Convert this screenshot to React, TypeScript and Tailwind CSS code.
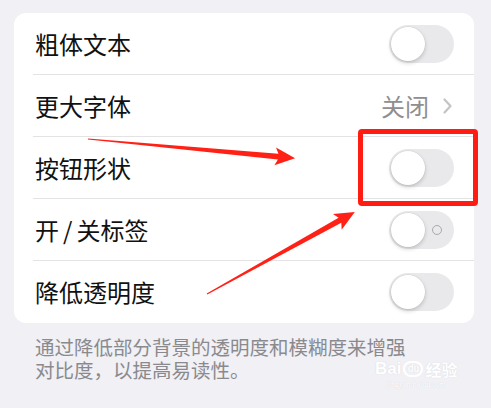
const font = { fontFamily: '"Noto Sans CJK SC", "Noto Sans", sans-serif' };

function Toggle({ label }: { label?: boolean }) {
  return (
    <div className="relative w-[65px] h-[38px] rounded-full bg-[#e9e9eb] shrink-0">
      <div className="absolute left-[2px] top-[2px] w-[34px] h-[34px] rounded-full bg-white shadow-[0_2px_4px_rgba(0,0,0,0.18),0_0_0_0.5px_rgba(0,0,0,0.06)]" />
      {label && (
        <div className="absolute right-[12px] top-[14px] w-[10px] h-[10px] rounded-full border-[1.5px] border-[#a9a9ad]" />
      )}
    </div>
  );
}

function Row({
  title,
  last,
  children,
}: {
  title: React.ReactNode;
  last?: boolean;
  children: React.ReactNode;
}) {
  return (
    <div
      className={`ml-[19px] h-[62px] pr-[20px] flex items-center justify-between ${
        last ? "" : "border-b border-[#e3e3e6]"
      }`}
    >
      <span className="pl-[2px] text-[24px] leading-none text-[#111]">{title}</span>
      {children}
    </div>
  );
}

function Arrow({ x, y, len, angle }: { x: number; y: number; len: number; angle: number }) {
  const L = len;
  return (
    <g transform={`translate(${x} ${y}) rotate(${angle})`}>
      <polygon
        points={`0,-0.6 ${L - 17},-2.8 ${L - 20},-9 ${L},0 ${L - 20},9 ${L - 17},2.8 0,0.6`}
        fill="#ff2116"
      />
    </g>
  );
}

export default function App() {
  return (
    <div
      className="relative w-[491px] h-[408px] overflow-hidden bg-[#f0f0f5] pt-[13px] pl-[14px]"
      style={font}
    >
      <div className="w-[460px] bg-white rounded-[12px]">
        <Row title="粗体文本">
          <Toggle />
        </Row>
        <Row title="更大字体">
          <div className="flex items-center gap-[14px] pr-[2px]">
            <span className="text-[24px] leading-none text-[#8e8e93]">关闭</span>
            <svg width="9" height="16" viewBox="0 0 9 16" fill="none">
              <path d="M1.5 1.5 L7.5 8 L1.5 14.5" stroke="#c4c4c8" strokeWidth="2.2" strokeLinecap="round" strokeLinejoin="round" />
            </svg>
          </div>
        </Row>
        <Row title="按钮形状">
          <Toggle />
        </Row>
        <Row
          title={
            <>
              开<span className="mx-[4px]">/</span>关标签
            </>
          }
        >
          <Toggle label />
        </Row>
        <Row title="降低透明度" last>
          <Toggle />
        </Row>
      </div>

      <p className="mt-[12px] ml-[21px] flex flex-col items-start text-[19.5px] leading-[23px] text-[#8a8a8e]">
        <span>通过降低部分背景的透明度和模糊度来增强</span>
        <span>对比度，以提高易读性。</span>
      </p>

      <div className="absolute left-[358px] top-[129px] w-[120px] h-[77px] border-[5px] border-[#ff1c12] rounded-[4px]" />

      <svg className="absolute left-0 top-0 pointer-events-none" width="491" height="408">
        <Arrow x={88} y={139} len={208} angle={5.3} />
        <Arrow x={207} y={294} len={169} angle={-29} />
      </svg>

      <div className="absolute left-[375px] top-[360px] flex flex-col items-center text-white [text-shadow:0_0_1px_rgba(200,200,210,0.8)]">
        <div className="flex items-end gap-[2px] leading-none">
          <span className="text-[17px] font-bold" style={{ fontFamily: '"Liberation Sans", sans-serif' }}>Bai</span>
          <span className="w-[20px] h-[16px] rounded-full border-2 border-white text-[9px] leading-[12px] text-center font-bold">du</span>
          <span className="text-[16px] font-bold">经验</span>
        </div>
        <span className="text-[8px] mt-[2px]" style={{ fontFamily: '"Liberation Serif", serif' }}>jingyan.baidu.com</span>
      </div>
    </div>
  );
}
